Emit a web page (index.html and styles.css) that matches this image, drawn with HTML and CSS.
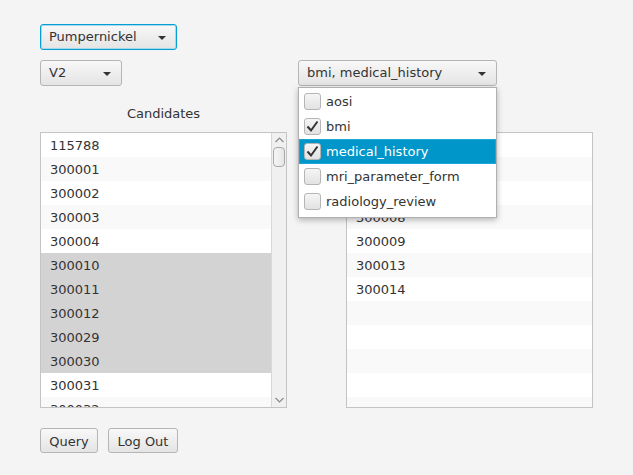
FILE: index.html
```html
<!DOCTYPE html>
<html>
<head>
<meta charset="utf-8">
<link rel="stylesheet" href="styles.css">
</head>
<body>
<div class="root">
  <div class="row">
    <div class="combo focused w-pump"><span class="combo-text">Pumpernickel</span><span class="arrow"></span></div>
  </div>
  <div class="row row2">
    <div class="combo w-v2"><span class="combo-text">V2</span><span class="arrow"></span></div>
    <div class="combo-wrap">
      <div class="combo w-forms"><span class="combo-text">bmi, medical_history</span><span class="arrow"></span></div>
      <div class="popup">
        <div class="item"><span class="check"></span><span>aosi</span></div>
        <div class="item"><span class="check"><svg width="17" height="17" viewBox="0 0 17 17"><path d="M3.5 8.5 L7 12.5 L13.5 3.5" fill="none" stroke="#333" stroke-width="2"/></svg></span><span>bmi</span></div>
        <div class="item selected"><span class="check"><svg width="17" height="17" viewBox="0 0 17 17"><path d="M3.5 8.5 L7 12.5 L13.5 3.5" fill="none" stroke="#333" stroke-width="2"/></svg></span><span>medical_history</span></div>
        <div class="item"><span class="check"></span><span>mri_parameter_form</span></div>
        <div class="item"><span class="check"></span><span>radiology_review</span></div>
      </div>
    </div>
  </div>
  <div class="columns">
    <div class="col">
      <div class="col-label">Candidates</div>
      <div class="list">
        <div class="rows">
          <div class="cell">115788</div>
          <div class="cell">300001</div>
          <div class="cell">300002</div>
          <div class="cell">300003</div>
          <div class="cell">300004</div>
          <div class="cell sel">300010</div>
          <div class="cell sel">300011</div>
          <div class="cell sel">300012</div>
          <div class="cell sel">300029</div>
          <div class="cell sel">300030</div>
          <div class="cell">300031</div>
          <div class="cell">300032</div>
        </div>
        <div class="scrollbar">
          <div class="sb-btn"><svg width="9" height="6" viewBox="0 0 9 6"><path d="M0.5 5 L4.5 1 L8.5 5" fill="none" stroke="#8a8a8a" stroke-width="1.2"/></svg></div>
          <div class="sb-track"><div class="sb-thumb"></div></div>
          <div class="sb-btn"><svg width="9" height="6" viewBox="0 0 9 6"><path d="M0.5 1 L4.5 5 L8.5 1" fill="none" stroke="#8a8a8a" stroke-width="1.2"/></svg></div>
        </div>
      </div>
    </div>
    <div class="col">
      <div class="col-label">&nbsp;</div>
      <div class="list">
        <div class="rows">
          <div class="cell"></div>
          <div class="cell"></div>
          <div class="cell"></div>
          <div class="cell">300008</div>
          <div class="cell">300009</div>
          <div class="cell">300013</div>
          <div class="cell">300014</div>
          <div class="cell"></div>
          <div class="cell"></div>
          <div class="cell"></div>
          <div class="cell"></div>
          <div class="cell"></div>
        </div>
      </div>
    </div>
  </div>
  <div class="buttons">
    <div class="btn w-query">Query</div>
    <div class="btn w-logout">Log Out</div>
  </div>
</div>
</body>
</html>
```
FILE: styles.css
```css
html, body {
  margin: 0;
  padding: 0;
  background: #f4f4f4;
}
body {
  font-family: "DejaVu Sans", "Liberation Sans", sans-serif;
  font-size: 13px;
  color: #333333;
  width: 633px;
  height: 475px;
  overflow: hidden;
}
.root {
  padding: 24px 0 0 40px;
  display: flex;
  flex-direction: column;
}
.row {
  display: flex;
  align-items: flex-start;
}
.row2 {
  margin-top: 10px;
}
.combo {
  box-sizing: border-box;
  height: 26px;
  border: 1px solid #b5b5b5;
  border-radius: 3px;
  background: linear-gradient(to bottom, #f8f8f8, #e4e4e4);
  display: flex;
  align-items: center;
  justify-content: space-between;
  padding: 0 10px 0 8px;
}
.combo.focused {
  border-color: #039ed3;
  box-shadow: inset 0 0 0 1px #a9d8ec;
}
.combo-text {
  line-height: 16px;
  white-space: nowrap;
}
.arrow {
  width: 0;
  height: 0;
  border-left: 4px solid transparent;
  border-right: 4px solid transparent;
  border-top: 4px solid #333;
  margin-top: 1px;
}
.w-pump { width: 137px; }
.w-v2 { width: 82px; }
.w-forms { width: 199px; }
.combo-wrap {
  position: relative;
  margin-left: 176px;
}
.popup {
  position: absolute;
  left: 0;
  top: 27px;
  width: 199px;
  box-sizing: border-box;
  background: #ffffff;
  border: 1px solid #b0b0b0;
  box-shadow: 0 2px 6px rgba(0,0,0,0.28);
  padding: 1px 0 3px 0;
  z-index: 5;
}
.item {
  height: 25px;
  display: flex;
  align-items: center;
  padding-left: 5px;
  gap: 5px;
  box-sizing: border-box;
}
.item.selected {
  background: #0096c9;
  color: #ffffff;
  box-shadow: inset 0 0 0 1px #1aa6d6, inset 0 0 0 2px #0096c9;
}
.check {
  box-sizing: border-box;
  width: 17px;
  height: 17px;
  border: 1px solid #b5b5b5;
  border-radius: 3px;
  background: linear-gradient(to bottom, #f5f5f5, #e2e2e2);
  display: flex;
  align-items: center;
  justify-content: center;
  flex: none;
}
.check svg {
  display: block;
  margin: -1px;
}
.columns {
  display: flex;
  gap: 59px;
  margin-top: 20px;
}
.col {
  width: 247px;
  display: flex;
  flex-direction: column;
}
.col-label {
  text-align: center;
  height: 16px;
  line-height: 16px;
  margin-bottom: 10px;
}
.list {
  box-sizing: border-box;
  height: 276px;
  border: 1px solid #c4c4c4;
  background: #ffffff;
  display: flex;
  overflow: hidden;
}
.rows {
  flex: 1;
  display: flex;
  flex-direction: column;
  overflow: hidden;
}
.cell {
  box-sizing: border-box;
  height: 24px;
  padding-top: 1px;
  line-height: 24px;
  padding-left: 9px;
  flex: none;
  background: #ffffff;
  overflow: hidden;
}
.cell:nth-child(even) {
  background: #f9f9f9;
}
.cell.sel {
  background: #d3d3d3;
}
.scrollbar {
  width: 15px;
  flex: none;
  background: #f0f0f0;
  border-left: 1px solid #d8d8d8;
  box-sizing: border-box;
  display: flex;
  flex-direction: column;
}
.sb-btn {
  height: 14px;
  display: flex;
  align-items: center;
  justify-content: center;
  flex: none;
}
.sb-track {
  flex: 1;
  position: relative;
}
.sb-thumb {
  box-sizing: border-box;
  margin: 0 1px 0 1px;
  height: 20px;
  border: 1px solid #a8a8a8;
  border-radius: 4px;
  background: linear-gradient(to right, #f6f6f6, #e6e6e6);
}
.buttons {
  display: flex;
  gap: 10px;
  margin-top: 20px;
}
.btn {
  box-sizing: border-box;
  height: 25px;
  padding-top: 1px;
  border: 1px solid #b5b5b5;
  border-radius: 3px;
  background: linear-gradient(to bottom, #f8f8f8, #e4e4e4);
  display: flex;
  align-items: center;
  justify-content: center;
  white-space: nowrap;
}
.w-query { width: 58px; }
.w-logout { width: 70px; }
```
